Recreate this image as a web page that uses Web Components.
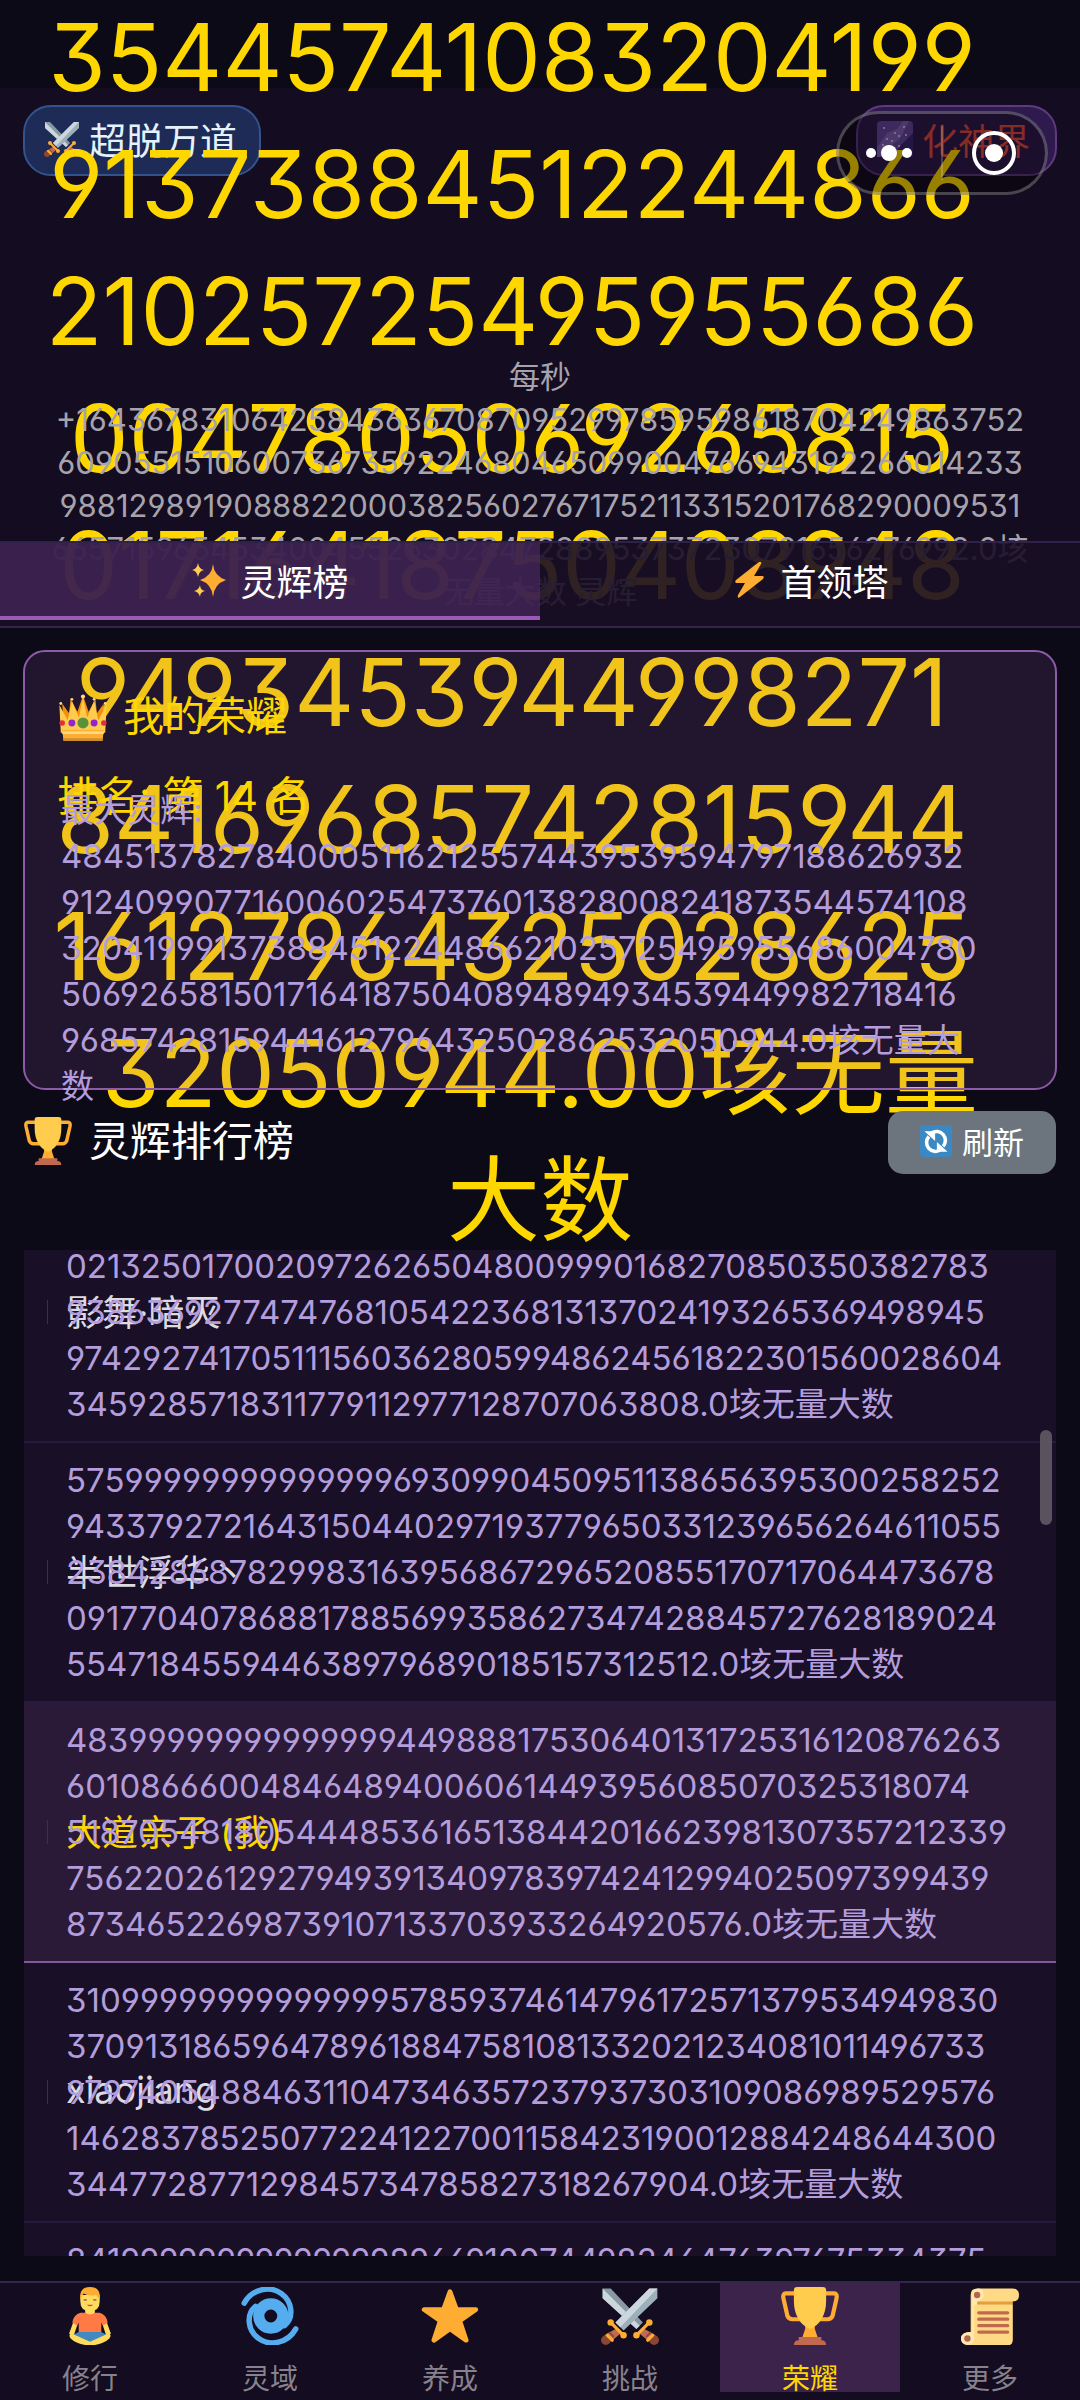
<!DOCTYPE html>
<html lang="zh-CN">
<head>
<meta charset="UTF-8">
<meta name="viewport" content="width=device-width, initial-scale=1.0">
<title>灵辉榜</title>
<style>
    html, body {
        margin: 0;
        background-color: #0d0a17;
    }

    body {
        color: #ffffff;
        font-family: Inter, "Noto Sans CJK SC", sans-serif;
        font-size: 32px;
        font-feature-settings: "cv03", "cv04", "cv09";
    }
</style>
</head>
<body>
<realm-app></realm-app>

<script>
const ICONS = {
    swords: `
        <path fill="#8899a6" d="M1 1h5l20 21-4 4L1 7z"/><path fill="#ccd6dd" d="M1 1l23 23-2 2L1 7z"/>
        <path fill="#9dafba" d="M35 1h-5L9 22l5 5L35 7z"/><path fill="#ccd6dd" d="M30 1h5L12 25l-3-3z"/>
        <path fill="#be6a54" d="M9 26l3 3-6 5-4-4zM27 26l-3 3 6 5 4-4z"/>
        <path stroke="#8a4633" stroke-width="1" d="M5 28l3 3M28 31l3-3"/>
        <circle cx="3" cy="33" r="3" fill="#8a4633"/><circle cx="33" cy="33" r="3" fill="#8a4633"/>
        <path stroke="#ffac33" stroke-width="2" stroke-linecap="round" d="M6 22l8 8M30 22l-8 8M4 30l3 3M32 30l-3 3"/>
        <circle cx="6" cy="22" r="2" fill="#ffac33"/><circle cx="14" cy="30" r="2" fill="#ffac33"/>
        <circle cx="30" cy="22" r="2" fill="#ffac33"/><circle cx="22" cy="30" r="2" fill="#ffac33"/>`,
    galaxy: `
        <rect width="36" height="36" rx="4" fill="#66459b"/>
        <path fill="#8060b5" d="M0 27L10 12 20 8l6-8h6l-9 18-11 8L3 36H0z"/>
        <path fill="#3b2472" d="M36 12v20q0 4-4 4H16l8-12z"/>
        <g fill="#e1d8f0"><circle cx="6" cy="24" r="1"/><circle cx="10" cy="18" r="1"/><circle cx="15" cy="20" r="1"/><circle cx="18" cy="12" r="1"/><circle cx="22" cy="15" r="1"/><circle cx="27" cy="6" r="1"/><circle cx="29" cy="14" r="1"/><circle cx="12" cy="28" r="1"/><circle cx="22" cy="25" r="1"/><circle cx="29" cy="28" r="1"/><circle cx="7" cy="7" r="1"/><circle cx="18" cy="31" r="1"/></g>`,
    sparkles: `
        <path fill="#ffac33" d="M22 2q1 12 13 16-12 4-13 17Q21 22 9 18 21 14 22 2z"/>
        <path fill="#ffcc4d" d="M7 1q1 6 6 7-5 1-6 7-1-6-6-7 5-1 6-7zM9 23q0 5 5 6-5 1-5 6-1-5-6-6 5-1 6-6z"/>`,
    bolt: `<path fill="#ffac33" d="M28 0L5 18q-2 3 1 3h8L7 33q-1 4 2 2l23-18q2-3-1-3h-8l7-12q1-3-2-2z"/>`,
    crown: `
        <path fill="#f4900c" d="M4 22L3 9l5 7L9 6l5 9 4-12 4 12 5-9 1 10 5-7-1 13z"/>
        <path fill="#ffcc4d" d="M2 30L1 10l6 11 3-14 5 12 3-14 3 14 5-12 3 14 6-11-1 20z"/>
        <path fill="#ffac33" d="M3 28h30l-1 8H4z"/><path fill="#ffd983" d="M3 29h30v2H3z"/><path fill="#cc8f2c" d="M4 34h28v2H4z"/>
        <g fill="#ffd983"><circle cx="2" cy="9" r="1"/><circle cx="10" cy="6" r="1"/><circle cx="18" cy="4" r="1.500"/><circle cx="26" cy="6" r="1"/><circle cx="34" cy="9" r="1"/></g>
        <circle cx="18" cy="23" r="4" fill="#5c913b"/><circle cx="10" cy="23" r="2.500" fill="#9226cc"/><circle cx="26" cy="23" r="2.500" fill="#9226cc"/>
        <circle cx="3" cy="23" r="2" fill="#dd2e44"/><circle cx="33" cy="23" r="2" fill="#dd2e44"/>`,
    trophy: `
        <path fill="none" stroke="#ffac33" stroke-width="2.6" stroke-linejoin="round" d="M9 4H3Q1 4 1.500 7L4 18q1 2 3 2h6M27 4h6q2 0 1.500 3L32 18q-1 2-3 2h-6"/>
        <path fill="#ffac33" d="M15 22h6v4l2 6H13l2-6z"/>
        <path fill="#ffcc4d" d="M8 2q0-2 2-2h16q2 0 2 2v7c0 8-4 15-10 17C12 24 8 17 8 9z"/>
        <path fill="#c1694f" d="M11 31h14v2q3 0 3 3H8q0-3 3-3z"/>`,
    refresh: `
        <rect width="36" height="36" rx="4" fill="#3b88c3"/>
        <path fill="none" stroke="#fff" stroke-width="4" d="M13 9a10 10 0 0 1 13 15M23 28a10 10 0 0 1-13-15"/>
        <path fill="#fff" d="M5 7h12v11zM31 30H19V19z"/>`,
    meditate: `
        <path fill="#ffdc5d" d="M9 18l2 3-3 9-3-1zM27 18l-2 3 3 9 3-1z"/>
        <path fill="#ff7a44" d="M12 16h12q4 1 5 6l-3 2-1-2v7H11v-7l-1 2-3-2q1-5 5-6z"/>
        <path fill="#ffdc5d" d="M15 13h6v3q-3 2-6 0z"/>
        <path fill="#4289c1" d="M11 28h14l4 2-6 5H13l-6-5z"/>
        <path fill="#ffdc5d" d="M7 29l11 5 11-5q3 0 1 3-3 3-9 4h-6q-6-1-9-4-2-3 1-3z"/>
        <path fill="#ffdc5d" d="M12 5h12v4q0 6-6 6t-6-6z"/>
        <path fill="#ffac33" d="M12 8Q11 0 18 0t6 8l-2-3q-5 1-8-1z"/>
        <path fill="none" stroke="#c1694f" d="M14 8h2M20 8h2"/><path fill="#bf5736" d="M16 11h4q-2 2-4 0z"/>`,
    cyclone: `
        <g fill="none" stroke="#55acee" stroke-linecap="round"><circle cx="18.500" cy="18" r="7.500" stroke-width="7"/>
        <path stroke-width="3.400" d="M2 10C7 1 18-1 25 4s8 15 2 20M34 26c-5 9-16 11-23 6S3 17 9 12"/></g>`,
    star: `<path fill="#ffac33" stroke="#ffac33" stroke-width="3" stroke-linejoin="round" d="M18 3l4 11h12l-10 7 4 12-10-7-10 7 4-12L2 14h12z"/>`,
    scroll: `
        <path fill="#ffd983" d="M10 1h22q4 0 4 4t-4 4v24q0 3-3 3H4q-4 0-4-4 0-3 4-4h2V5q0-4 4-4z"/>
        <path fill="#e39f3d" d="M8 9h24v2H8z"/><path fill="#ffe8b6" d="M7 28V5q0-4 4-4 3 0 3 4 0 3-4 4v21q0 5-6 6-4-1-4-4 0-4 7-4z"/>
        <path fill="#ffd983" d="M8 11h24v22q0 3-3 3H6q3-2 2-6z"/>
        <circle cx="10" cy="5" r="2" fill="#b5674c"/><circle cx="4" cy="32" r="2" fill="#b5674c"/>
        <path stroke="#c1694f" stroke-width="2" stroke-linecap="round" d="M11 16h18M11 20h18M11 24h18M11 28h18"/>`
};

class EmojiIcon extends HTMLElement {
    connectedCallback() {
        this.attachShadow({ mode: 'open' }).innerHTML = `
            <style>
                :host {
                    display: inline-flex;
                    flex: none;
                    width: 36px;
                    height: 36px;
                }

                svg {
                    width: 100%;
                    height: 100%;
                }
            </style>
            <svg viewBox="0 0 36 36" aria-hidden="true">${ICONS[this.getAttribute('name')]}</svg>
        `;
    }
}

class StatBadge extends HTMLElement {
    connectedCallback() {
        this.attachShadow({ mode: 'open' }).innerHTML = `
            <style>
                :host {
                    display: flex;
                    align-items: center;
                    gap: 9px;
                    box-sizing: border-box;
                    height: 71px;
                    padding: 0 22px 4px 19px;
                    border: 2px solid #34528c;
                    border-radius: 28px;
                    background-color: #1d2b56;
                    color: #e3f2fd;
                    font-size: 37px;
                }

                :host([kind="realm"]) {
                    padding-right: 25px;
                    border-color: #5e3a80;
                    background-color: #2f1a4e;
                    color: #e04a3f;
                    font-size: 36px;
                }
            </style>
            <slot name="icon"></slot><slot></slot>
        `;
    }
}

class RealmHeader extends HTMLElement {
    connectedCallback() {
        this.attachShadow({ mode: 'open' }).innerHTML = `
            <style>
                :host {
                    display: block;
                    position: relative;
                    box-sizing: border-box;
                    height: 453px;
                    margin-top: 88px;
                    padding: 17px 23px;
                    background-color: #140c20;
                }

                .badges {
                    display: flex;
                    justify-content: space-between;
                }

                /* the total outgrows the header and spills over the page */
                .total,
                .rate {
                    position: absolute;
                    left: 0;
                    right: 0;
                    margin: 0;
                    text-align: center;
                    white-space: pre;
                }

                .total {
                    top: -94px;
                    color: #ffd700;
                    font-size: 93px;
                    line-height: 127px;
                }

                .total .digits {
                    display: block;
                    padding-right: 56px;
                }

                .rate {
                    top: 267px;
                    color: #a7a3ad;
                    font-size: 31px;
                    line-height: 43px;
                }
            </style>
            <div class="badges">
                <stat-badge><emoji-icon slot="icon" name="swords"></emoji-icon>超脱万道</stat-badge>
                <stat-badge kind="realm"><emoji-icon slot="icon" name="galaxy"></emoji-icon>化神界</stat-badge>
            </div>
            <p class="total"><span class="digits">35445741083204199
91373884512244866
21025725495955686
0047805069265815
01716418750408948
9493453944998271
84169685742815944
16127964325028625</span>32050944.00垓无量
大数</p>
            <p class="rate">每秒
+1643678310642584363670870952997859598618704249863752
60905515106007367359224680465099004766943192266014233
988129891908882200038256027671752113315201768290009531
66571596545340045526302847288953737230791656276992.0垓
无量大数 灵辉</p>
        `;
    }
}

class TabBar extends HTMLElement {
    connectedCallback() {
        this.attachShadow({ mode: 'open' }).innerHTML = `
            <style>
                :host {
                    display: block;
                    position: relative;
                }

                nav {
                    display: flex;
                    box-sizing: border-box;
                    height: 87px;
                    padding-bottom: 6px;
                    border-top: 2px solid #30214a;
                    border-bottom: 2px solid #342548;
                    background-color: rgba(25, 14, 38, 0.9);
                }

                button {
                    flex: 1;
                    display: flex;
                    align-items: center;
                    justify-content: center;
                    gap: 13px;
                    border: 0;
                    border-bottom: 4px solid transparent;
                    background: none;
                    color: #ffffff;
                    font: inherit;
                    font-size: 36px;
                }

                button.active {
                    border-bottom-color: #9b59b6;
                    background-color: rgba(80, 45, 105, 0.6);
                }
            </style>
            <nav>
                <button class="active"><emoji-icon name="sparkles"></emoji-icon>灵辉榜</button>
                <button><emoji-icon name="bolt"></emoji-icon>首领塔</button>
            </nav>
        `;
    }
}

class HonorCard extends HTMLElement {
    connectedCallback() {
        this.attachShadow({ mode: 'open' }).innerHTML = `
            <style>
                :host {
                    display: block;
                    position: relative;
                    box-sizing: border-box;
                    height: 440px;
                    margin: 22px 23px 0;
                    padding: 30px 32px;
                    border: 2px solid #8e5ba8;
                    border-radius: 22px;
                    background-color: rgba(155, 89, 182, 0.15);
                }

                h2,
                .rank {
                    display: flex;
                    align-items: center;
                    margin: 0;
                    color: #ffd700;
                    font-size: 41px;
                    font-weight: 400;
                    line-height: 68px;
                }

                h2 {
                    gap: 14px;
                }

                h2 emoji-icon {
                    width: 52px;
                    height: 50px;
                }

                .rank {
                    margin-top: 12px;
                }

                /* record lies over the rank line */
                .record {
                    position: absolute;
                    top: 135px;
                    left: 36px;
                    margin: 0;
                    color: #b39ddb;
                    font-size: 33px;
                    line-height: 46px;
                    white-space: pre;
                }
            </style>
            <h2><emoji-icon name="crown"></emoji-icon>我的荣耀</h2>
            <div class="rank">排名: 第 14 名</div>
            <p class="record">最大灵辉:
48451378278400051162125574439539594797188626932
91240990771600602547376013828008241873544574108
32041999137388451224486621025725495955686004780
50692658150171641875040894894934539449982718416
96857428159441612796432502862532050944.0垓无量大
数</p>
        `;
    }
}

class RankRow extends HTMLElement {
    connectedCallback() {
        this.attachShadow({ mode: 'open' }).innerHTML = `
            <style>
                :host {
                    display: grid;
                    align-items: center;
                    position: relative;
                    box-sizing: border-box;
                    height: 260px;
                    padding: 0 42px;
                    border-bottom: 2px solid #251a40;
                }

                :host([me]) {
                    border-bottom-color: #80589b;
                    background-color: #2a1a38;
                }

                /* sliver left of the collapsed place column */
                :host::before {
                    content: "";
                    position: absolute;
                    left: 23px;
                    width: 1px;
                    height: 24px;
                    background-color: #3a3048;
                }

                .name,
                .score {
                    grid-area: 1 / 1;
                    white-space: pre;
                }

                .name {
                    padding-bottom: 4px;
                    color: #dddae0;
                    font-size: 36px;
                }

                :host([me]) .name {
                    color: #ffd700;
                }

                .score {
                    color: #b39ddb;
                    font-size: 33px;
                    line-height: 46px;
                }
            </style>
            <div class="name">${this.getAttribute('name')}</div>
            <div class="score"><slot></slot></div>
        `;
    }
}

class RankList extends HTMLElement {
    connectedCallback() {
        this.attachShadow({ mode: 'open' }).innerHTML = `
            <style>
                :host {
                    display: flex;
                    flex-direction: column;
                    flex: 1;
                    min-height: 0;
                    margin: 21px 24px 25px;
                }

                header {
                    display: flex;
                    align-items: flex-start;
                    justify-content: space-between;
                    margin-bottom: 76px;
                }

                h2 {
                    display: flex;
                    align-items: center;
                    gap: 17px;
                    margin: 0;
                    font-size: 41px;
                    font-weight: 400;
                    line-height: 60px;
                }

                h2 emoji-icon {
                    width: 48px;
                    height: 48px;
                }

                button {
                    display: flex;
                    position: relative;
                    align-items: center;
                    gap: 10px;
                    height: 63px;
                    padding: 0 32px 4px;
                    border: 0;
                    border-radius: 15px;
                    background-color: #6c757d;
                    color: #ffffff;
                    font: inherit;
                    font-size: 31px;
                }

                button emoji-icon {
                    width: 32px;
                    height: 32px;
                }

                .scroller {
                    position: relative;
                    flex: 1;
                    min-height: 0;
                    overflow: hidden;
                    background-color: #190f26;
                }

                .rows {
                    margin-top: -67px;
                }

                .thumb {
                    position: absolute;
                    top: 180px;
                    right: 4px;
                    width: 12px;
                    height: 95px;
                    border-radius: 6px;
                    background-color: #59525f;
                }
            </style>
            <header>
                <h2><emoji-icon name="trophy"></emoji-icon>灵辉排行榜</h2>
                <button><emoji-icon name="refresh"></emoji-icon>刷新</button>
            </header>
            <div class="scroller">
                <div class="rows"><slot></slot></div>
                <div class="thumb"></div>
            </div>
        `;
    }
}

class NavItem extends HTMLElement {
    connectedCallback() {
        this.attachShadow({ mode: 'open' }).innerHTML = `
            <style>
                :host {
                    display: block;
                    flex: 1;
                }

                a {
                    display: flex;
                    flex-direction: column;
                    align-items: center;
                    gap: 14px;
                    height: 109px;
                    padding-top: 4px;
                    box-sizing: border-box;
                    color: #88828c;
                    font-size: 28px;
                    line-height: 40px;
                    text-decoration: none;
                }

                emoji-icon {
                    width: 58px;
                    height: 58px;
                }

                :host([active]) a {
                    background-color: #3c234c;
                    color: #ffd700;
                }
            </style>
            <a href="#"><emoji-icon name="${this.getAttribute('icon')}"></emoji-icon><slot></slot></a>
        `;
    }
}

class NavBar extends HTMLElement {
    connectedCallback() {
        this.attachShadow({ mode: 'open' }).innerHTML = `
            <style>
                :host {
                    display: flex;
                    padding-bottom: 8px;
                    border-top: 2px solid #33264e;
                    background-color: #140c20;
                }
            </style>
            <slot></slot>
        `;
    }
}

class MenuCapsule extends HTMLElement {
    connectedCallback() {
        this.attachShadow({ mode: 'open' }).innerHTML = `
            <style>
                :host {
                    display: flex;
                    position: absolute;
                    top: 111px;
                    right: 32px;
                    box-sizing: border-box;
                    width: 212px;
                    height: 84px;
                    border: 3px solid rgba(255, 255, 255, 0.25);
                    border-radius: 42px;
                    background-color: rgba(0, 0, 0, 0.4);
                }

                button {
                    flex: 1;
                    padding: 0;
                    border: 0;
                    background: none;
                }

                button + button {
                    margin: 12px 0;
                    border-left: 2px solid rgba(255, 255, 255, 0.2);
                }

                svg {
                    display: block;
                    margin: auto;
                }
            </style>
            <button aria-label="菜单"><svg width="48" height="46" fill="#fff"><circle cx="5" cy="23" r="5"/><circle cx="23" cy="23" r="8"/><circle cx="41" cy="23" r="5"/></svg></button>
            <button aria-label="关闭"><svg width="46" height="46"><circle cx="23" cy="23" r="20" fill="none" stroke="#fff" stroke-width="4"/><circle cx="23" cy="23" r="9" fill="#fff"/></svg></button>
        `;
    }
}

class RealmApp extends HTMLElement {
    connectedCallback() {
        this.attachShadow({ mode: 'open' }).innerHTML = `
            <style>
                :host {
                    display: flex;
                    flex-direction: column;
                    position: relative;
                    height: 100vh;
                    overflow: hidden;
                }
            </style>
            <realm-header></realm-header>
            <tab-bar></tab-bar>
            <honor-card></honor-card>
            <rank-list>
                <rank-row name="影舞·暗灭">&nbsp;
02132501700209726265048009990168270850350382783
938636927747476810542236813137024193265369498945
9742927417051115603628059948624561822301560028604
3459285718311779112977128707063808.0垓无量大数</rank-row>
                <rank-row name="半世浮华丶">575999999999999996930990450951138656395300258252
9433792721643150440297193779650331239656264611055
238428687829983163956867296520855170717064473678
091770407868817885699358627347428845727628189024
5547184559446389796890185157312512.0垓无量大数</rank-row>
                <rank-row me name="大道亲子 (我)">4839999999999999944988817530640131725316120876263
6010866600484648940060614493956085070325318074
5187054818054448536165138442016623981307357212339
756220261292794939134097839742412994025097399439
87346522698739107133703933264920576.0垓无量大数</rank-row>
                <rank-row name="xiaojiang">3109999999999999957859374614796172571379534949830
3709131865964789618847581081332021234081011496733
979740548846311047346357237937303109086989529576
146283785250772241227001158423190012884248644300
344772877129845734785827318267904.0垓无量大数</rank-row>
                <rank-row name="">841999999999999998966910074498246476397675334375
&nbsp;
&nbsp;
&nbsp;
&nbsp;</rank-row>
            </rank-list>
            <nav-bar>
                <nav-item icon="meditate">修行</nav-item>
                <nav-item icon="cyclone">灵域</nav-item>
                <nav-item icon="star">养成</nav-item>
                <nav-item icon="swords">挑战</nav-item>
                <nav-item icon="trophy" active>荣耀</nav-item>
                <nav-item icon="scroll">更多</nav-item>
            </nav-bar>
            <menu-capsule></menu-capsule>
        `;
    }
}

customElements.define('emoji-icon', EmojiIcon);
customElements.define('stat-badge', StatBadge);
customElements.define('realm-header', RealmHeader);
customElements.define('tab-bar', TabBar);
customElements.define('honor-card', HonorCard);
customElements.define('rank-row', RankRow);
customElements.define('rank-list', RankList);
customElements.define('nav-item', NavItem);
customElements.define('nav-bar', NavBar);
customElements.define('menu-capsule', MenuCapsule);
customElements.define('realm-app', RealmApp);
</script>
</body>
</html>
